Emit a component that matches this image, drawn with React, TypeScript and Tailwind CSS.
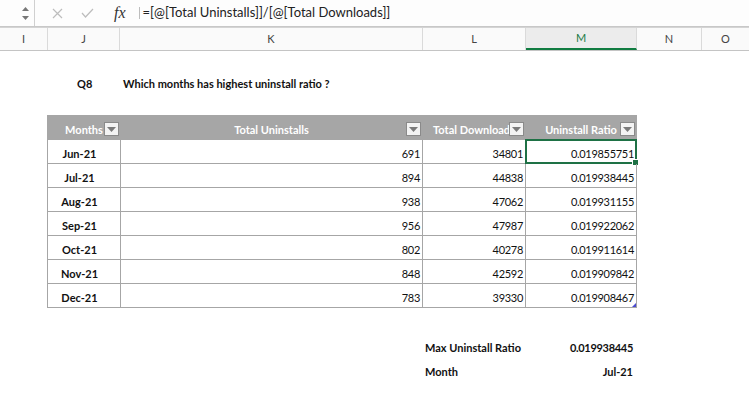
import React from "react";

const rows = [
  { month: "Jun-21", uninstalls: 691, downloads: 34801, ratio: "0.019855751" },
  { month: "Jul-21", uninstalls: 894, downloads: 44838, ratio: "0.019938445" },
  { month: "Aug-21", uninstalls: 938, downloads: 47062, ratio: "0.019931155" },
  { month: "Sep-21", uninstalls: 956, downloads: 47987, ratio: "0.019922062" },
  { month: "Oct-21", uninstalls: 802, downloads: 40278, ratio: "0.019911614" },
  { month: "Nov-21", uninstalls: 848, downloads: 42592, ratio: "0.019909842" },
  { month: "Dec-21", uninstalls: 783, downloads: 39330, ratio: "0.019908467" },
];

const columns = [
  { name: "I", w: "w-[48px]" },
  { name: "J", w: "w-[72px]" },
  { name: "K", w: "w-[303px]" },
  { name: "L", w: "w-[103px]" },
  { name: "M", w: "w-[111px]" },
  { name: "N", w: "w-[65px]" },
  { name: "O", w: "w-[47px]" },
];

const FilterButton = () => (
  <div className="absolute right-[1px] bottom-[3px] z-10 w-[15px] h-[14px] border border-[#8a8a8a] bg-[#f3f3f3] flex items-center justify-center">
    <svg width="9" height="5" viewBox="0 0 9 5">
      <path d="M0 0 L9 0 L4.5 5 Z" fill="#7a7a7a" />
    </svg>
  </div>
);

const HeaderCell = ({ label, first }: { label: string; first?: boolean }) => (
  <div
    className={`relative h-[25px] bg-[#a6a6a6] border-r border-b border-[#a6a6a6] ${
      first ? "border-l" : ""
    } flex items-end justify-center pb-[2px] overflow-hidden`}
  >
    <span className="whitespace-nowrap text-white font-bold text-[11px] leading-[14px]">{label}</span>
    <FilterButton />
  </div>
);

export default function App() {
  return (
    <div
      className="w-[749px] h-[410px] bg-white overflow-hidden text-[#111]"
      style={{ fontFamily: "Lato, 'Open Sans', sans-serif" }}
    >
      {/* formula bar */}
      <div className="h-[27px] flex items-center bg-[#fdfdfd] border-b border-[#c8c8c8]">
        <div className="w-[35px] h-full border-r border-[#d0d0d0] flex flex-col items-end justify-center gap-[5px] pr-[5px]">
          <svg width="7" height="4" viewBox="0 0 7 4">
            <path d="M0 4 L7 4 L3.5 0 Z" fill="#777" />
          </svg>
          <svg width="7" height="4" viewBox="0 0 7 4">
            <path d="M0 0 L7 0 L3.5 4 Z" fill="#777" />
          </svg>
        </div>
        <div className="flex items-center gap-[18px] pl-[17px]">
          <svg width="11" height="11" viewBox="0 0 11 11">
            <path d="M1 1 L10 10 M10 1 L1 10" stroke="#bdbdbd" strokeWidth="1.2" />
          </svg>
          <svg width="13" height="10" viewBox="0 0 13 10">
            <path d="M1 5 L4.5 9 L12 1" stroke="#bdbdbd" strokeWidth="1.2" fill="none" />
          </svg>
          <span
            className="italic text-[16px] leading-none text-[#333] ml-[2px]"
            style={{ fontFamily: "'Liberation Serif', serif" }}
          >
            fx
          </span>
        </div>
        <div className="ml-[13px] w-px h-[12px] bg-[#bdbdbd]" />
        <div className="ml-[3px] text-[13px] text-[#222] whitespace-nowrap">
          =[@[Total Uninstalls]]/[@[Total Downloads]]
        </div>
      </div>

      {/* column headers */}
      <div className="h-[24px] flex border-t border-[#d4d4d4] border-b border-b-[#c4c4c4] bg-[#fafafa]">
        {columns.map((c, i) => (
          <div
            key={c.name}
            className={`${c.w} h-full flex items-center justify-center text-[11px] ${
              i < columns.length - 1 ? "border-r border-[#dadada]" : ""
            } ${
              c.name === "M"
                ? "bg-[#ececec] text-[#1b7a44] border-b-2 border-b-[#107c41]"
                : "text-[#444]"
            }`}
          >
            {c.name}
          </div>
        ))}
      </div>

      {/* sheet body */}
      <div className="h-[22px]" />
      <div className="h-[22px] flex items-center text-[11px] font-bold">
        <span className="ml-[77px] w-[46px]">Q8</span>
        <span>Which months has highest uninstall ratio ?</span>
      </div>
      <div className="h-[20px]" />

      <div className="ml-[47px] w-[590px] grid grid-cols-[74px_302px_103px_111px] text-[11px]">
        <HeaderCell label="Months" first />
        <HeaderCell label="Total Uninstalls" />
        <HeaderCell label="Total Downloads" />
        <HeaderCell label="Uninstall Ratio" />

        {rows.map((r, i) => (
          <React.Fragment key={r.month}>
            <div className="h-[24px] border-l border-r border-b border-[#a6a6a6] flex items-end justify-center pr-[9px] pb-[2px] font-bold leading-[14px]">
              {r.month}
            </div>
            <div className="h-[24px] border-r border-b border-[#a6a6a6] flex items-end justify-end pr-[2px] pb-[2px] leading-[14px] tracking-[-0.3px]">
              {r.uninstalls}
            </div>
            <div className="h-[24px] border-r border-b border-[#a6a6a6] flex items-end justify-end pr-[2px] pb-[2px] leading-[14px] tracking-[-0.3px]">
              {r.downloads}
            </div>
            <div className="relative h-[24px] border-r border-b border-[#a6a6a6] flex items-end justify-end pr-[2px] pb-[2px] leading-[14px] tracking-[-0.3px]">
              {r.ratio}
              {i === 0 && (
                <div className="absolute -left-[1px] -top-[1px] -right-[1px] -bottom-[1px] border-2 border-[#1e7145]">
                  <div className="absolute -right-[4px] -bottom-[4px] w-[7px] h-[7px] bg-[#1e7145] border border-white" />
                </div>
              )}
              {i === rows.length - 1 && (
                <svg className="absolute right-[0px] bottom-[0px]" width="4" height="4" viewBox="0 0 4 4">
                  <path d="M4 0 L4 4 L0 4 Z" fill="#4a4ad0" />
                </svg>
              )}
            </div>
          </React.Fragment>
        ))}
      </div>

      <div className="h-[29px]" />
      <div className="ml-[425px] w-[208px] h-[23px] flex items-center justify-between text-[11px] font-bold">
        <span>Max Uninstall Ratio</span>
        <span className="tracking-[-0.3px]">0.019938445</span>
      </div>
      <div className="ml-[425px] w-[208px] h-[24px] flex items-center justify-between text-[11px] font-bold">
        <span>Month</span>
        <span>Jul-21</span>
      </div>
    </div>
  );
}
